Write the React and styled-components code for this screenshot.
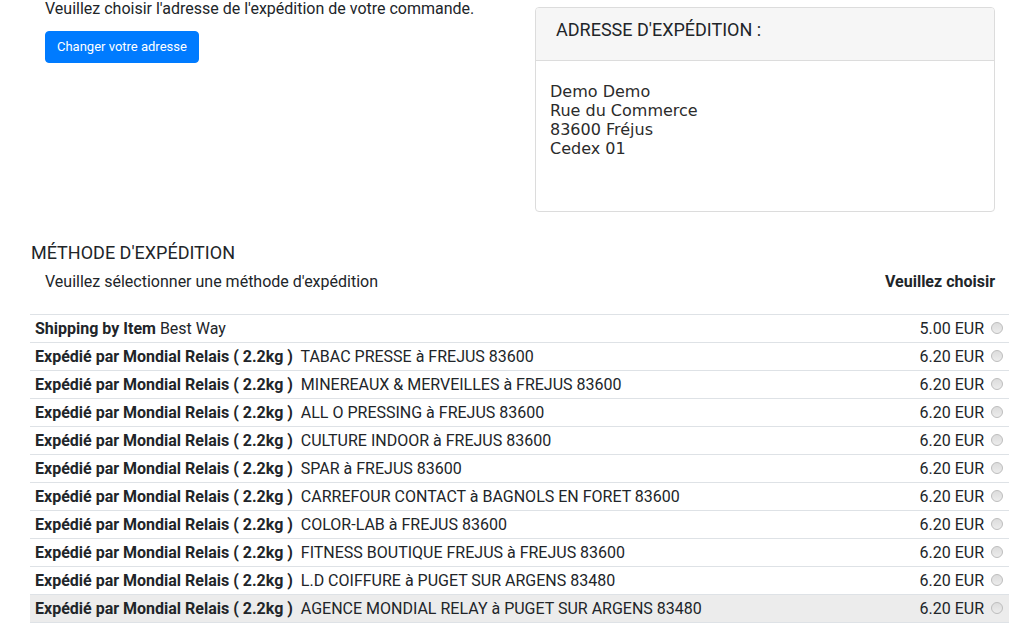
import styled, { createGlobalStyle } from "styled-components";

const GlobalStyle = createGlobalStyle`
  body {
    margin: 0;
    background: #ffffff;
    font-family: Roboto, "Liberation Sans", sans-serif;
    color: #212529;
  }
`;

const shops = [
  "TABAC PRESSE à FREJUS 83600",
  "MINEREAUX & MERVEILLES à FREJUS 83600",
  "ALL O PRESSING à FREJUS 83600",
  "CULTURE INDOOR à FREJUS 83600",
  "SPAR à FREJUS 83600",
  "CARREFOUR CONTACT à BAGNOLS EN FORET 83600",
  "COLOR-LAB à FREJUS 83600",
  "FITNESS BOUTIQUE FREJUS à FREJUS 83600",
  "L.D COIFFURE à PUGET SUR ARGENS 83480",
  "AGENCE MONDIAL RELAY à PUGET SUR ARGENS 83480",
];

function App() {
  return (
    <>
      <GlobalStyle />
      <Page>
        <TopRow>
          <Col>
            <Intro>Veuillez choisir l'adresse de l'expédition de votre commande.</Intro>
            <BlueBtn>Changer votre adresse</BlueBtn>
          </Col>
          <Col>
            <Card>
              <CardHeader>ADRESSE D'EXPÉDITION :</CardHeader>
              <CardBody>
                Demo Demo
                <br />
                Rue du Commerce
                <br />
                83600 Fréjus
                <br />
                Cedex 01
              </CardBody>
            </Card>
          </Col>
        </TopRow>

        <SectionTitle>MÉTHODE D'EXPÉDITION</SectionTitle>
        <SubHead>
          <span>Veuillez sélectionner une méthode d'expédition</span>
          <strong>Veuillez choisir</strong>
        </SubHead>

        <Table>
          <Row>
            <Label>
              <b>Shipping by Item</b> Best Way
            </Label>
            <Price>5.00 EUR</Price>
            <Radio type="radio" name="ship" />
          </Row>
          {shops.map((s, i) => (
            <Row key={s} $hover={i === shops.length - 1}>
              <Label>
                <b>Expédié par Mondial Relais ( 2.2kg )</b>&nbsp; {s}
              </Label>
              <Price>6.20 EUR</Price>
              <Radio type="radio" name="ship" />
            </Row>
          ))}
        </Table>
      </Page>
    </>
  );
}

export default App;

const Page = styled.div`
  width: 980px;
  margin-left: 30px;
  margin-top: -3px;
`;

const TopRow = styled.div`
  display: flex;
`;

const Col = styled.div`
  width: 50%;
  padding: 0 15px;
  box-sizing: border-box;
`;

const Intro = styled.div`
  font-size: 16px;
  line-height: 24px;
`;

const BlueBtn = styled.button`
  margin-top: 10px;
  background: #007bff;
  color: #fff;
  border: 1px solid #007bff;
  border-radius: 4px;
  font-family: Roboto, sans-serif;
  font-size: 13px;
  line-height: 20px;
  padding: 5px 11px;
`;

const Card = styled.div`
  margin-top: 10px;
  border: 1px solid #dcdcdc;
  border-radius: 4px;
  height: 205px;
  box-sizing: border-box;
  overflow: hidden;
`;

const CardHeader = styled.div`
  background: #f6f6f6;
  border-bottom: 1px solid #dcdcdc;
  height: 52px;
  padding-left: 20px;
  font-size: 18px;
  line-height: 44px;
`;

const CardBody = styled.div`
  padding: 21px 14px;
  font-family: "DejaVu Sans", Verdana, sans-serif;
  font-size: 16px;
  line-height: 19px;
  color: #2b2b2b;
`;

const SectionTitle = styled.div`
  margin-top: 29px;
  padding-left: 1px;
  font-size: 18px;
  line-height: 24px;
`;

const SubHead = styled.div`
  display: flex;
  justify-content: space-between;
  padding: 5px 15px 0 15px;
  font-size: 16px;
  line-height: 24px;
  height: 49px;
  box-sizing: border-box;
`;

const Table = styled.div`
  width: 979px;
  border-bottom: 1px solid #dee2e6;
`;

const Row = styled.div`
  display: flex;
  align-items: center;
  height: 28px;
  box-sizing: border-box;
  border-top: 1px solid #dee2e6;
  padding: 0 6px 0 5px;
  font-size: 16px;
  background: ${(p) => (p.$hover ? "#ececec" : "transparent")};
`;

const Label = styled.div`
  flex: 1;
  white-space: nowrap;
  b {
    font-weight: 700;
  }
`;

const Price = styled.div`
  margin-right: 7px;
`;

const Radio = styled.input`
  appearance: none;
  margin: 0 0 2px 0;
  width: 12px;
  height: 12px;
  border-radius: 50%;
  border: 1px solid #bdbdbd;
  background: linear-gradient(#dcdcdc, #ececec);
  box-sizing: border-box;
`;
